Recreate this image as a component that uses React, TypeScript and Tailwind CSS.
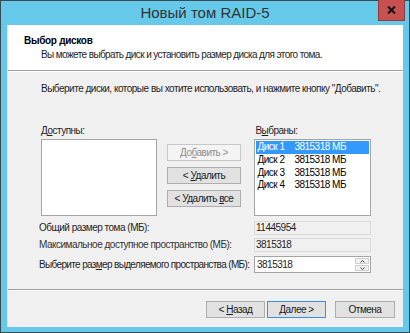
import React from 'react'

const font = { fontFamily: '"Liberation Sans", Arial, sans-serif' }

const U: React.FC<{ children: React.ReactNode }> = ({ children }) => (
  <span className="underline underline-offset-[1px]">{children}</span>
)

const disks = [
  { name: 'Диск 1', size: '3815318 МБ' },
  { name: 'Диск 2', size: '3815318 МБ' },
  { name: 'Диск 3', size: '3815318 МБ' },
  { name: 'Диск 4', size: '3815318 МБ' },
]

const Btn: React.FC<{
  children: React.ReactNode
  className?: string
  disabled?: boolean
  primary?: boolean
}> = ({ children, className = '', disabled, primary }) => (
  <div
    className={
      'flex items-center justify-center border leading-none whitespace-nowrap ' +
      (disabled
        ? 'border-[#c8c8c8] bg-[#f4f4f4] text-[#8d8d8d] '
        : primary
        ? 'border-[#3c8ee0] bg-[#e1e1e1] text-[#1a1a1a] '
        : 'border-[#adadad] bg-[#e1e1e1] text-[#1a1a1a] ') +
      className
    }
  >
    <span>{children}</span>
  </div>
)

export default function App() {
  return (
    <div
      className="w-[410px] h-[333px] border border-[#3a4a52] bg-[#66c9ea] flex flex-col text-[#1e1e1e] text-[10px] tracking-[-0.5px] whitespace-nowrap"
      style={font}
    >
      {/* title bar */}
      <div className="h-[24px] flex items-start relative">
        <div className="flex-1 text-center text-[15px] tracking-normal leading-[22px] text-[#333] pt-[1px]">
          Новый том RAID-5
        </div>
        <div className="absolute right-[4px] top-[-1px] w-[27px] h-[21px] bg-[#c75050] border border-[#8e3a3a] border-t-0 flex items-center justify-center">
          <svg width="9" height="8" viewBox="0 0 9 8">
            <path d="M1 0.5 L8 7.5 M8 0.5 L1 7.5" stroke="#111" strokeWidth="2" />
          </svg>
        </div>
      </div>

      {/* content */}
      <div className="mx-[6px] mb-[5px] flex-1 flex flex-col bg-[#f0f0f0] border-l border-l-[#c9ecf8]">
        {/* header */}
        <div className="h-[46px] bg-white border-b border-b-[#a0a0a0] pl-[16px] pt-[9px]">
          <div className="leading-[13px] font-bold text-black tracking-[-0.3px]">Выбор дисков</div>
          <div className="leading-[13px] pl-[17px] mt-[1px] tracking-[-0.6px]">
            Вы можете выбрать диск и установить размер диска для этого тома.
          </div>
        </div>
        <div className="h-px bg-white" />

        {/* body */}
        <div className="flex-1 flex flex-col pl-[33px] pr-[32px]">
          <div className="leading-[13px] mt-[10px]">
            Выберите диски, которые вы хотите использовать, и нажмите кнопку "Добавить".
          </div>

          <div className="flex mt-[29px]">
            <div className="w-[116px] flex flex-col">
              <div className="leading-[13px] mb-[2px]">
                Д<U>о</U>ступны:
              </div>
              <div className="h-[77px] bg-white border border-[#a5a5a5]" />
            </div>

            <div className="w-[75px] ml-[10px] mt-[20px] flex flex-col gap-[6px]">
              <Btn disabled className="h-[17px]">
                До<U>б</U>авить &gt;
              </Btn>
              <Btn className="h-[17px]">
                &lt; <U>У</U>далить
              </Btn>
              <Btn className="h-[17px]">
                &lt; Удалить <U>в</U>се
              </Btn>
            </div>

            <div className="w-[117px] ml-[13px] flex flex-col">
              <div className="leading-[13px] mb-[2px] pl-[1px]">
                В<U>ы</U>браны:
              </div>
              <div className="h-[77px] bg-white border border-[#a5a5a5] p-px flex flex-col">
                {disks.map((d, i) => (
                  <div
                    key={d.name}
                    className={
                      'h-[12.7px] flex items-center leading-none pl-px ' +
                      (i === 0 ? 'bg-[#3399ff] text-white' : 'text-black')
                    }
                  >
                    <span className="w-[37px]">{d.name}</span>
                    <span>{d.size}</span>
                  </div>
                ))}
              </div>
            </div>
          </div>

          {/* size rows */}
          <div className="flex flex-col mt-[5px] -ml-[2px]">
            <div className="flex items-center h-[14px]">
              <div className="flex-1 leading-none">Общий размер тома (МБ):</div>
              <div className="w-[117px] h-[14px] border border-[#dadada] leading-[12px] pl-px">
                11445954
              </div>
            </div>
            <div className="flex items-center h-[14px] mt-[3px]">
              <div className="flex-1 leading-none text-[#333]">
                Максимальное доступное пространство (МБ):
              </div>
              <div className="w-[117px] h-[14px] border border-[#dadada] leading-[12px] pl-px">
                3815318
              </div>
            </div>
            <div className="flex items-center h-[17px] mt-[4px]">
              <div className="flex-1 leading-none tracking-[-0.65px]">
                Выберите раз<U>м</U>ер выделяемого пространства (МБ):
              </div>
              <div className="w-[117px] h-[17px] border border-[#a5a5a5] bg-white flex">
                <div className="flex-1 leading-[15px] pl-[2px]">3815318</div>
                <div className="w-[16px] flex flex-col gap-px p-px">
                  <div className="flex-1 bg-[#f0f0f0] border border-[#d0d0d0] flex items-center justify-center">
                    <svg width="5" height="3" viewBox="0 0 5 3">
                      <path d="M0.5 2.5 L2.5 0.5 L4.5 2.5" stroke="#444" fill="none" />
                    </svg>
                  </div>
                  <div className="flex-1 bg-[#f0f0f0] border border-[#d0d0d0] flex items-center justify-center">
                    <svg width="5" height="3" viewBox="0 0 5 3">
                      <path d="M0.5 0.5 L2.5 2.5 L4.5 0.5" stroke="#444" fill="none" />
                    </svg>
                  </div>
                </div>
              </div>
            </div>
          </div>
        </div>

        {/* footer */}
        <div className="border-t border-t-[#a0a0a0] shadow-[inset_0_1px_0_#ffffff] h-[38px] flex items-start justify-end pr-[8px] pt-[11px]">
          <Btn className="w-[59px] h-[17px]">
            &lt; <U>Н</U>азад
          </Btn>
          <Btn primary className="w-[59px] h-[17px] ml-[2px]">
            <U>Д</U>алее &gt;
          </Btn>
          <Btn className="w-[60px] h-[17px] ml-[9px]">Отмена</Btn>
        </div>
      </div>
    </div>
  )
}
